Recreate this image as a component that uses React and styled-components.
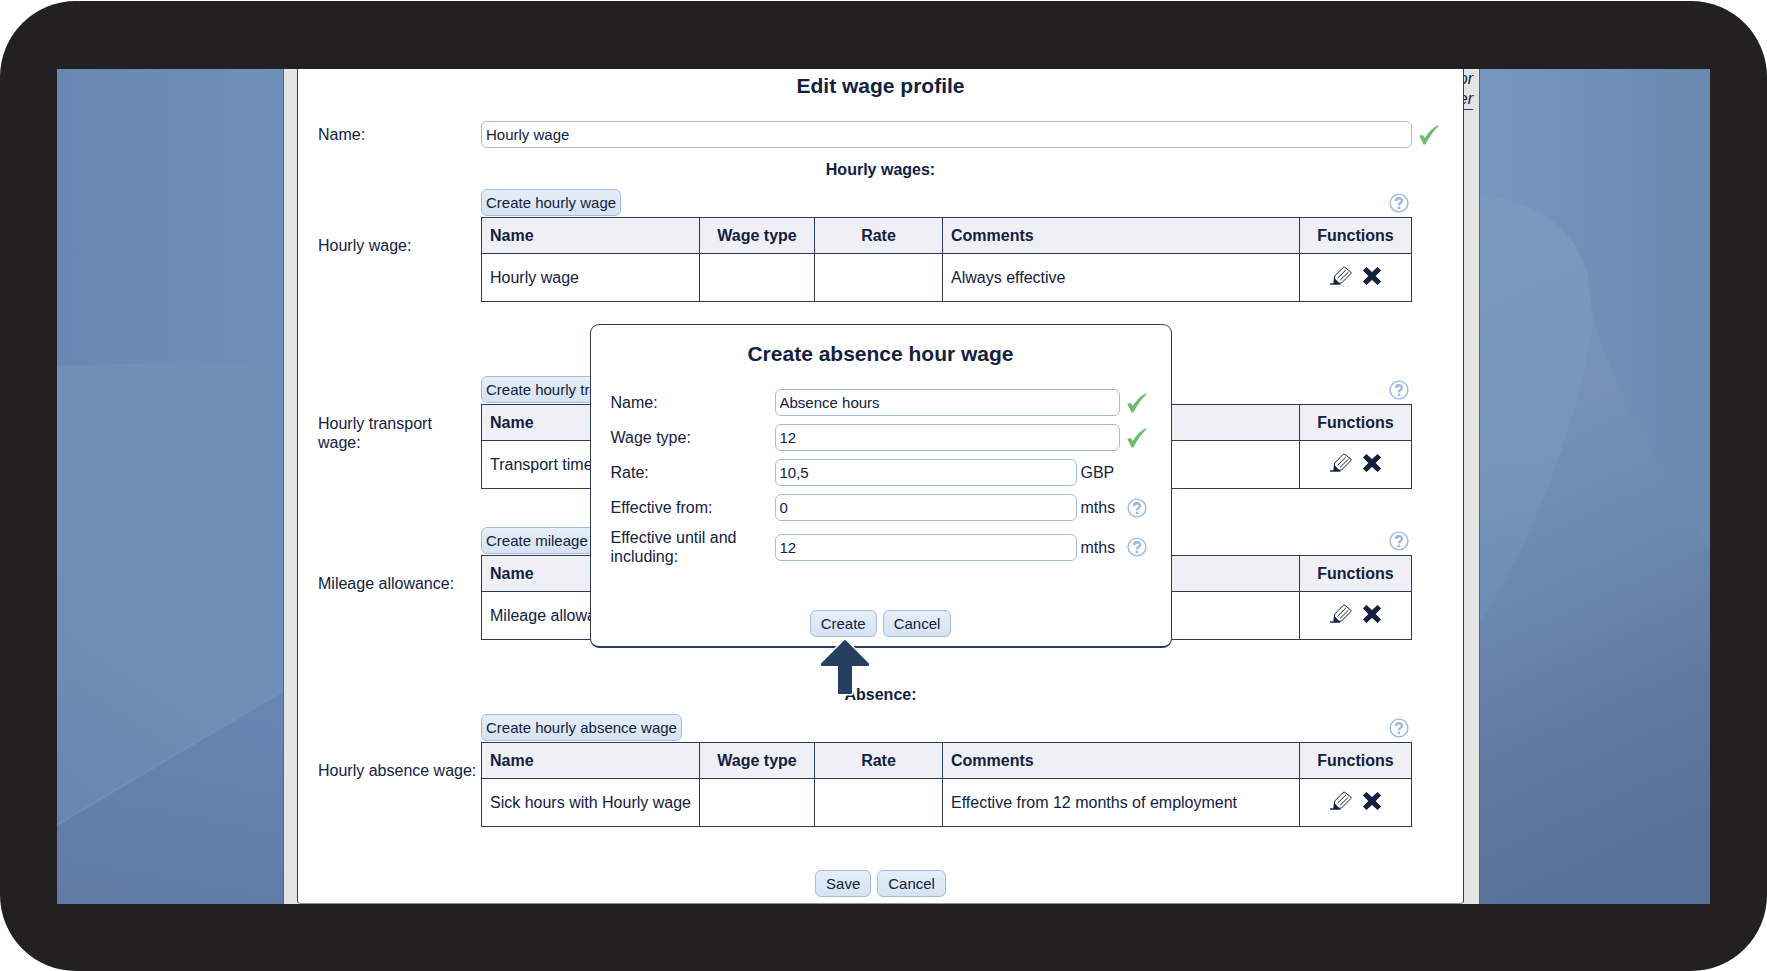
import React from 'react';
import styled, { createGlobalStyle } from 'styled-components';

const colors = {
  text: '#12213f',
  line: '#2b3b59',
  frame: '#222021',
  control: '#a1bbe6',
  header: '#f1eff6',
  gutter: '#e4e4e4',
  arrow: '#253f62',
  valid: '#6abd6a'
};

const wageSections = [
  {
    id: 'hourly',
    heading: 'Hourly wages:',
    label: 'Hourly wage:',
    action: 'Create hourly wage',
    name: 'Hourly wage',
    comment: 'Always effective',
    space: 12
  },
  {
    id: 'transport',
    label: 'Hourly transport wage:',
    action: 'Create hourly transport wage',
    name: 'Transport time',
    comment: '',
    space: 74
  },
  {
    id: 'mileage',
    label: 'Mileage allowance:',
    action: 'Create mileage allowance',
    name: 'Mileage allowance',
    comment: '',
    space: 38
  },
  {
    id: 'absence',
    heading: 'Absence:',
    label: 'Hourly absence wage:',
    action: 'Create hourly absence wage',
    name: 'Sick hours with Hourly wage',
    comment: 'Effective from 12 months of employment',
    space: 45
  }
];

const absenceFields = [
  { id: 'absence-name', label: 'Name:', value: 'Absence hours', valid: true },
  { id: 'absence-type', label: 'Wage type:', value: '12', valid: true },
  { id: 'absence-rate', label: 'Rate:', value: '10,5', unit: 'GBP' },
  { id: 'absence-from', label: 'Effective from:', value: '0', unit: 'mths', help: true },
  {
    id: 'absence-until',
    label: 'Effective until and including:',
    value: '12',
    unit: 'mths',
    help: true
  }
];

const CheckIcon = () => (
  <svg width='20' height='20' viewBox='0 0 20 20' aria-hidden='true'>
    <path d='M0.3 10.8 L3.4 10 L6 13 C9 7.5 13.5 2.6 19.2 0.2 L19.7 0.9 C14.8 5.4 10.5 11.5 6.4 19.2 L4.6 19.4 Z' fill={colors.valid} />
  </svg>
);

const HelpIcon = () => (
  <svg width='20' height='20' viewBox='0 0 20 20' fill='none' stroke='#9ab6e8' aria-hidden='true'>
    <circle cx='10' cy='10' r='8.9' strokeWidth='1.4' />
    <path d='M7 8 C7 4.4 13 4.4 13 7.8 C13 10 10 9.8 10 12.2' strokeWidth='2.4' />
    <path d='M10 13.6 V16' strokeWidth='2.5' />
  </svg>
);

const PencilIcon = () => (
  <svg width='22' height='19' viewBox='0 0 22 19' fill='none' stroke={colors.text} aria-hidden='true'>
    <path d='M4.6 10.2 L13.2 1.4 Q14 0.7 14.9 1.4 L20.8 6 Q21.6 6.8 20.8 7.6 L11.6 17' strokeWidth='1' />
    <path d='M7.6 12.2 L15.8 4 M10 14.4 L18.4 6.2' strokeWidth='1' />
    <path d='M4.6 10.2 L4.2 17.6 L11.6 17' strokeWidth='1' />
    <path d='M4.4 12.6 L9 17.4 L4 17.8 Z' fill={colors.text} />
    <path d='M0 18 H10.4' strokeWidth='1.4' />
  </svg>
);

const CrossIcon = () => (
  <svg width='20' height='20' viewBox='0 0 20 20' aria-hidden='true'>
    <path
      d='M4.4 1.4 L10 6.6 L15.6 1.4 L18.6 4.4 L13.2 10 L18.6 15.6 L15.6 18.6 L10 13.4 L4.4 18.6 L1.4 15.6 L6.8 10 L1.4 4.4 Z'
      fill={colors.text}
      stroke={colors.text}
      strokeLinejoin='round'
    />
  </svg>
);

const Backdrop = () => (
  <Wallpaper viewBox='0 0 1653 834' preserveAspectRatio='none' aria-hidden='true'>
    <defs>
      <linearGradient id='sky'>
        <stop offset='0' stopColor='#6987b2' />
        <stop offset='1' stopColor='#6f90b9' />
      </linearGradient>
      <linearGradient id='haze' x1='0.3' y1='0' x2='0' y2='1'>
        <stop offset='0' stopColor='#7090b7' />
        <stop offset='0.5' stopColor='#6e8eb5' />
        <stop offset='1' stopColor='#6683ae' />
      </linearGradient>
      <linearGradient id='hill' x1='0.6' y1='0' x2='0.4' y2='1'>
        <stop offset='0' stopColor='#6886b2' />
        <stop offset='1' stopColor='#607ca5' />
      </linearGradient>
      <linearGradient id='east'>
        <stop offset='0' stopColor='#7697c0' />
        <stop offset='1' stopColor='#6a88b0' />
      </linearGradient>
      <linearGradient id='slope' x1='0' y1='0' x2='0.15' y2='1'>
        <stop offset='0' stopColor='#7b98bc' />
        <stop offset='0.35' stopColor='#7591b7' />
        <stop offset='0.58' stopColor='#6b88b0' />
        <stop offset='0.8' stopColor='#607aa2' />
        <stop offset='1' stopColor='#587198' />
      </linearGradient>
      <linearGradient id='glow' x1='0' y1='0' x2='0' y2='1'>
        <stop offset='0' stopColor='#7c99c0' />
        <stop offset='0.6' stopColor='#7c99bf' />
        <stop offset='1' stopColor='#6f8eb7' />
      </linearGradient>
    </defs>
    <rect width='240' height='300' fill='url(#sky)' />
    <path d='M0 296 L240 292 V834 H0 Z' fill='url(#haze)' />
    <path d='M0 755 L240 613 V834 H0 Z' fill='url(#hill)' />
    <path d='M0 755 L240 613' stroke='#7593b9' strokeWidth='2' opacity='0.7' />
    <rect x='1420' width='233' height='834' fill='url(#east)' />
    <path
      d='M1420 126 C1460 129 1505 145 1526 191 C1535 212 1532 225 1536 246 C1550 310 1610 410 1653 481 V834 H1420 Z'
      fill='url(#slope)'
    />
    <path
      d='M1420 126 C1460 129 1505 145 1526 191 C1533 212 1532 225 1535 256 C1518 370 1470 480 1420 558 Z'
      fill='url(#glow)'
      opacity='0.5'
    />
  </Wallpaper>
);

const WageSection = ({ section }) => (
  <>
    {section.heading && <GroupHeading space={section.space}>{section.heading}</GroupHeading>}
    <FormRow space={section.heading ? 10 : section.space}>
      <Label as='span' id={section.id}>{section.label}</Label>
      <div>
        <Toolbar>
          <Button compact>{section.action}</Button>
          <IconButton aria-label='Help'>
            <HelpIcon />
          </IconButton>
        </Toolbar>
        <Table aria-labelledby={section.id}>
          <colgroup>
            <Col share={218} />
            <Col share={115} />
            <Col share={128} />
            <Col share={357} />
            <Col share={112} />
          </colgroup>
          <thead>
            <tr>
              <Th>Name</Th>
              <Th centered>Wage type</Th>
              <Th centered>Rate</Th>
              <Th>Comments</Th>
              <Th centered>Functions</Th>
            </tr>
          </thead>
          <tbody>
            <tr>
              <Td>{section.name}</Td>
              <Td />
              <Td />
              <Td>{section.comment}</Td>
              <Td>
                <Functions>
                  <IconButton aria-label='Edit'>
                    <PencilIcon />
                  </IconButton>
                  <IconButton aria-label='Delete'>
                    <CrossIcon />
                  </IconButton>
                </Functions>
              </Td>
            </tr>
          </tbody>
        </Table>
      </div>
    </FormRow>
  </>
);

const AbsenceField = ({ field }) => (
  <PopupRow>
    <Label htmlFor={field.id}>{field.label}</Label>
    <FieldBox>
      <Input id={field.id} defaultValue={field.value} />
      {field.unit && <Unit>{field.unit}</Unit>}
    </FieldBox>
    {field.valid && <CheckIcon />}
    {field.help && (
      <IconButton aria-label='Help'>
        <HelpIcon />
      </IconButton>
    )}
  </PopupRow>
);

const App = () => (
  <Frame>
    <GlobalStyle />
    <Screen>
      <Backdrop />
      <Desk>
        <Modal>
          <Title>Edit wage profile</Title>
          <FormRow space={23}>
            <Label htmlFor='profile-name'>Name:</Label>
            <Input id='profile-name' defaultValue='Hourly wage' />
            <CheckIcon />
          </FormRow>
          {wageSections.map(section => (
            <WageSection key={section.id} section={section} />
          ))}
          <Actions space={43}>
            <Button>Save</Button>
            <Button>Cancel</Button>
          </Actions>
          <Popup role='dialog' aria-labelledby='popup-title'>
            <Title id='popup-title'>Create absence hour wage</Title>
            <PopupFields>
              {absenceFields.map(field => (
                <AbsenceField key={field.id} field={field} />
              ))}
            </PopupFields>
            <Actions space={44}>
              <Pointed>
                <Button>Create</Button>
                <Arrow viewBox='0 0 56 62' aria-hidden='true'>
                  <path
                    d='M28 4 L51 27 V28 H34 V56 H22 V28 H5 V27 Z'
                    fill='#fff'
                    stroke='#fff'
                    strokeWidth='5'
                    strokeLinejoin='round'
                  />
                  <path
                    d='M28 4 L51 27 V28 H34 V56 H22 V28 H5 V27 Z'
                    fill={colors.arrow}
                    stroke={colors.arrow}
                    strokeWidth='2'
                    strokeLinejoin='round'
                  />
                </Arrow>
              </Pointed>
              <Button>Cancel</Button>
            </Actions>
          </Popup>
        </Modal>
        <Gutter>
          <span>or</span>
          <GutterLink href='#er'>er</GutterLink>
        </Gutter>
      </Desk>
    </Screen>
  </Frame>
);

const GlobalStyle = createGlobalStyle`
  * {
    box-sizing: border-box;
  }

  body {
    margin: 0;
    background-color: white;
    color: ${colors.text};
    font: 16px/19px 'Liberation Sans', Arial, sans-serif;
  }

  svg {
    display: block;
  }
`;

const Frame = styled.div`
  display: flex;
  min-height: calc(100vh - 1px);
  margin-top: 1px;
  padding: 68px 57px 67px;
  border-radius: 76px;
  background-color: ${colors.frame};
`;

const Screen = styled.div`
  flex: 1;
  position: relative;
  display: grid;
  grid-template-columns: minmax(0, 1fr);
  padding: 0 230px 0 226px;
  overflow: hidden;
`;

const Wallpaper = styled.svg`
  position: absolute;
  inset: 0;
  width: 100%;
  height: 100%;
`;

const Desk = styled.div`
  position: relative;
  display: grid;
  grid-template-columns: minmax(0, 1fr) 15px;
  padding-left: 13px;
  border-left: 1px solid #56657c;
  border-right: 1px solid #56657c;
  background-color: ${colors.gutter};
`;

const Modal = styled.main`
  position: relative;
  z-index: 1;
  padding: 5px 20px;
  border: 1px solid ${colors.line};
  border-top: 0;
  border-bottom-color: #8d949f;
  border-radius: 0 0 4px 4px;
  background-color: white;
`;

const Gutter = styled.aside`
  display: flex;
  flex-direction: column;
  align-items: flex-end;
  padding-right: 6px;
  font-style: italic;
  line-height: 20px;
`;

const GutterLink = styled.a`
  color: inherit;
  text-decoration: none;
  border-bottom: 1px solid ${colors.line};
`;

const Title = styled.h1`
  margin: 0;
  text-align: center;
  font-size: 21px;
  line-height: 24px;
`;

const GroupHeading = styled.h2`
  margin: ${props => props.space}px 0 0;
  text-align: center;
  font-size: 16px;
  line-height: 19px;
`;

const FormRow = styled.div`
  display: grid;
  grid-template-columns: 163px minmax(0, 1fr) 31px;
  align-items: center;
  margin-top: ${props => props.space}px;

  > svg {
    margin-left: 7px;
  }
`;

const Label = styled.label`
  padding-right: 4px;
`;

const Input = styled.input`
  width: 100%;
  min-width: 0;
  height: 27px;
  padding: 0 4px;
  border: 1px solid ${colors.control};
  border-radius: 6px;
  background-color: white;
  color: inherit;
  font-family: inherit;
  font-size: 15px;
`;

const Button = styled.button.withConfig({
  shouldForwardProp: prop => prop !== 'compact'
})`
  height: 27px;
  padding: 0 ${props => (props.compact ? 4 : 10)}px;
  border: 1px solid ${colors.control};
  border-radius: 6px;
  background: linear-gradient(#e6eef8, #d5e3f1);
  color: inherit;
  font-family: inherit;
  font-size: 15px;
`;

const IconButton = styled.button`
  padding: 0;
  border: 0;
  background: none;
`;

const Toolbar = styled.div`
  display: flex;
  justify-content: space-between;
  align-items: center;
  margin-bottom: 1px;
  padding-right: 3px;
`;

const Table = styled.table`
  width: 100%;
  table-layout: fixed;
  border-collapse: collapse;
`;

const Col = styled.col.withConfig({
  shouldForwardProp: prop => prop !== 'share'
})`
  width: calc(${props => props.share} / 930 * 100%);
`;

const Th = styled.th.withConfig({
  shouldForwardProp: prop => prop !== 'centered'
})`
  height: 36px;
  padding: 0 8px;
  border: 1px solid ${colors.line};
  background-color: ${colors.header};
  text-align: ${props => (props.centered ? 'center' : 'left')};
`;

const Td = styled.td`
  height: 48px;
  padding: 0 8px;
  border: 1px solid ${colors.line};
  white-space: nowrap;
`;

const Functions = styled.div`
  display: flex;
  justify-content: center;
  gap: 10px;
  padding-bottom: 4px;
`;

const Actions = styled.div`
  display: flex;
  justify-content: center;
  gap: 6px;
  margin-top: ${props => props.space}px;
`;

const Popup = styled.section`
  position: absolute;
  top: 255px;
  left: calc(50% - 291px);
  width: 582px;
  padding: 17px 20px 9px;
  border: 1px solid ${colors.line};
  border-bottom-width: 2px;
  border-radius: 9px;
  background-color: white;
`;

const PopupFields = styled.div`
  display: grid;
  gap: 6px;
  margin-top: 22px;
`;

const PopupRow = styled.div`
  display: grid;
  grid-template-columns: 164px minmax(0, 1fr) 20px;
  align-items: center;
  min-height: 29px;
  padding-right: 4px;
`;

const FieldBox = styled.div`
  display: grid;
  grid-template-columns: minmax(0, 1fr) auto;
  align-items: center;
  padding-right: 7px;
`;

const Unit = styled.span`
  width: 43px;
  padding-left: 4px;
`;

const Pointed = styled.div`
  position: relative;
`;

const Arrow = styled.svg`
  position: absolute;
  top: 100%;
  left: 7px;
  width: 56px;
  height: 62px;
`;

export default App;
